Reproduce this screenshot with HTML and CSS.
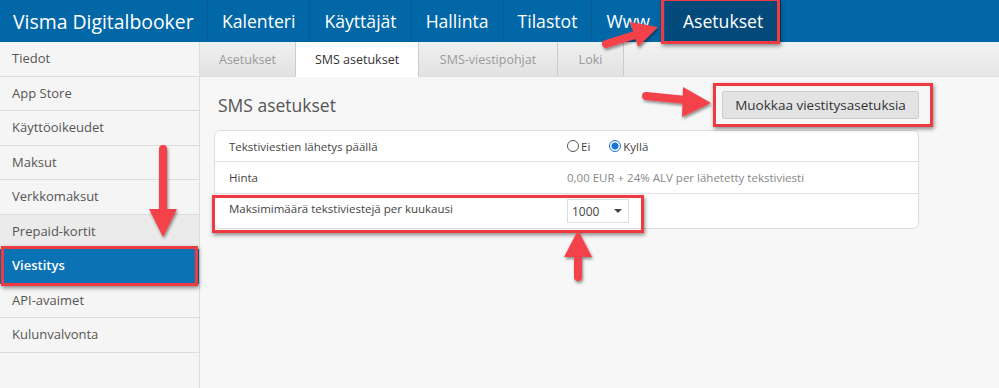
FILE: index.html
```html
<!DOCTYPE html>
<html lang="fi">
<head>
    <meta charset="UTF-8">
    <title>Visma Digitalbooker - SMS asetukset</title>
    <link rel="stylesheet" href="styles.css">
</head>
<body>
    <div class="topbar">
        <a class="brand">Visma Digitalbooker</a>
        <a class="nav-item">Kalenteri</a>
        <a class="nav-item">Käyttäjät</a>
        <a class="nav-item">Hallinta</a>
        <a class="nav-item">Tilastot</a>
        <a class="nav-item">Www</a>
        <a class="nav-item active">Asetukset</a>
    </div>

    <div class="main">
        <ul class="sidebar">
            <li>Tiedot</li>
            <li>App Store</li>
            <li>Käyttöoikeudet</li>
            <li>Maksut</li>
            <li>Verkkomaksut</li>
            <li class="hover">Prepaid-kortit</li>
            <li class="active">Viestitys</li>
            <li>API-avaimet</li>
            <li>Kulunvalvonta</li>
        </ul>

        <div class="content">
            <div class="tabs">
                <a class="tab">Asetukset</a>
                <a class="tab active">SMS asetukset</a>
                <a class="tab">SMS-viestipohjat</a>
                <a class="tab">Loki</a>
            </div>
            <div class="pane">
                <div class="pane-head">
                    <h2>SMS asetukset</h2>
                    <button class="btn">Muokkaa viestitysasetuksia</button>
                </div>
                <div class="panel">
                    <div class="row">
                        <span class="label">Tekstiviestien lähetys päällä</span>
                        <span class="value">
                            <span class="radio"></span><span class="opt">Ei</span>
                            <span class="radio checked"></span><span class="opt">Kyllä</span>
                        </span>
                    </div>
                    <div class="row">
                        <span class="label">Hinta</span>
                        <span class="value muted">0,00 EUR + 24% ALV per lähetetty tekstiviesti</span>
                    </div>
                    <div class="row last">
                        <span class="label">Maksimimäärä tekstiviestejä per kuukausi</span>
                        <span class="value"><span class="select">1000<span class="caret"></span></span></span>
                    </div>
                </div>
            </div>
        </div>
    </div>

    <!-- annotations drawn on top of the screenshot -->
    <div class="mark mark-nav"></div>
    <div class="mark mark-btn"></div>
    <div class="mark mark-row"></div>
    <div class="mark mark-side"></div>
    <svg class="arrows" width="999" height="388" viewBox="0 0 999 388">
        <defs>
            <filter id="sh" x="-20%" y="-20%" width="140%" height="140%">
                <feDropShadow dx="1" dy="2" stdDeviation="1.5" flood-color="#000" flood-opacity="0.45"/>
            </filter>
        </defs>
        <g fill="#f3424a" stroke="#f3424a" filter="url(#sh)">
            <line x1="606" y1="44" x2="638" y2="34" stroke-width="8" stroke-linecap="round"/>
            <polygon points="658,27 638,47 630,22" stroke="none"/>
            <line x1="646" y1="96" x2="686" y2="100" stroke-width="8" stroke-linecap="round"/>
            <polygon points="711,103 683,87 682,117" stroke="none"/>
            <line x1="163" y1="149" x2="163" y2="212" stroke-width="8" stroke-linecap="round"/>
            <polygon points="149,209 177,209 163,237" stroke="none"/>
            <line x1="578" y1="254" x2="578" y2="277" stroke-width="8" stroke-linecap="round"/>
            <polygon points="578,230 564,257 592,257" stroke="none"/>
        </g>
    </svg>
</body>
</html>
```

FILE: styles.css
```css
body{
    margin: 0;
    font-family: "Open Sans", "DejaVu Sans", sans-serif;
    background: #f7f7f7;
    color: #444;
    width: 999px;
    height: 388px;
    overflow: hidden;
    position: relative;
}
.topbar{
    display: flex;
    height: 42px;
    background: #0167a6;
}
.topbar a{
    color: white;
    display: flex;
    align-items: center;
    border-right: 1px solid #0a5a8f;
}
.brand{
    font-size: 19.4px;
    padding: 0 0 0 13px;
    width: 194px;
}
.nav-item{
    font-size: 17.6px;
    padding: 0 14px;
}
.nav-item.active{
    background: #03497a;
    padding: 0 18px;
    border-right: none;
}

.main{
    display: flex;
}
.sidebar{
    list-style: none;
    margin: 0;
    padding: 0;
    width: 199px;
    height: 346px;
    background: #f5f5f5;
    border-right: 1px solid #ddd;
}
.sidebar li{
    height: 33.5px;
    line-height: 33.5px;
    padding-left: 12px;
    font-size: 13px;
    color: #555;
    border-bottom: 1px solid #ddd;
}
.sidebar li.hover{
    background: #ebebeb;
}
.sidebar li.active{
    background: #0b72b6;
    color: white;
    font-weight: 600;
    border-bottom-color: #0b72b6;
}

.content{
    flex: 1;
}
.tabs{
    display: flex;
    height: 34px;
    background: linear-gradient(#f2f2f2, #e6e6e6);
    border-bottom: 1px solid #ddd;
}
.tab{
    display: flex;
    align-items: center;
    justify-content: center;
    font-size: 12.5px;
    color: #9a9a9a;
    background: linear-gradient(#f0f0f0, #e2e2e2);
    border-right: 1px solid #ccc;
    width: 95px;
}
.tab:nth-child(2){ width: 122px; }
.tab:nth-child(3){ width: 138px; }
.tab:nth-child(4){ width: 65px; }
.tab.active{
    background: white;
    color: #333;
    height: 35px;
}

.pane{
    padding: 14px 80px 0 14px;
}
.pane-head{
    display: flex;
    justify-content: space-between;
    align-items: center;
    height: 28px;
    margin-bottom: 11px;
}
h2{
    font-weight: normal;
    font-size: 17.5px;
    color: #555;
    margin: 0 0 0 4px;
}
.btn{
    font-family: inherit;
    font-size: 13.5px;
    color: #333;
    background: #e3e3e3;
    border: 1px solid #ccc;
    border-radius: 2px;
    height: 28px;
    width: 197px;
    padding: 0;
}
.panel{
    background: white;
    border: 1px solid #ddd;
    border-radius: 6px;
}
.row{
    display: flex;
    align-items: center;
    height: 31px;
    padding-left: 14px;
    border-bottom: 1px solid #e3e3e3;
    font-size: 11.5px;
}
.row:first-child{
    height: 30px;
}
.row.last{
    height: 34px;
    border-bottom: none;
}
.label{
    width: 338px;
    color: #444;
}
.row.last .label{
    margin-top: -6px;
}
.value{
    display: flex;
    align-items: center;
    color: #444;
}
.muted{
    color: #888;
}
.radio{
    width: 12px;
    height: 12px;
    border: 1px solid #555;
    border-radius: 50%;
    box-sizing: border-box;
    margin-right: 2px;
}
.radio.checked{
    border: 1px solid #1a73d9;
    background: radial-gradient(#1a73d9 45%, white 55%);
}
.opt{
    margin-right: 19px;
}
.select{
    display: flex;
    align-items: center;
    justify-content: space-between;
    width: 62px;
    height: 24px;
    box-sizing: border-box;
    border: 1px solid #ddd;
    padding: 0 6px 0 4px;
    font-size: 12px;
    color: #444;
}
.caret{
    border-left: 4px solid transparent;
    border-right: 4px solid transparent;
    border-top: 4px solid #444;
}

.mark{
    position: absolute;
    border: 3px solid #ef3a42;
    box-shadow: 1px 2px 4px rgba(0,0,0,0.45);
    box-sizing: border-box;
}
.mark-nav{ left: 661px; top: -2px; width: 119px; height: 46px; }
.mark-btn{ left: 713px; top: 83px; width: 220px; height: 44px; }
.mark-row{ left: 212px; top: 195px; width: 432px; height: 38px; }
.mark-side{ left: 1px; top: 246px; width: 197px; height: 40px; }
.arrows{
    position: absolute;
    left: 0;
    top: 0;
}
```
